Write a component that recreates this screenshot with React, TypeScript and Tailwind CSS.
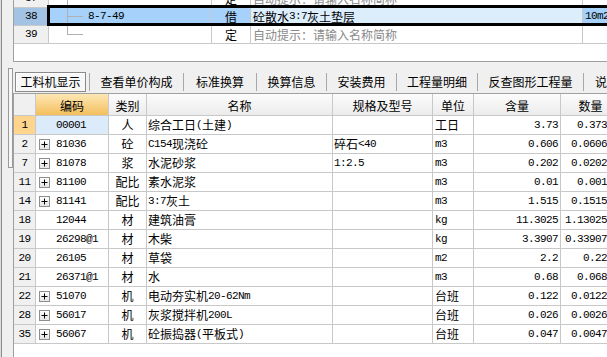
import React from "react";

const MONO = "font-['Liberation_Mono',monospace] text-[11px] tracking-[-0.6px]";

function T({ s }: { s: string }) {
  const parts = s.match(/[\x20-\x7e]+|[^\x20-\x7e]+/g) || [];
  return (
    <>
      {parts.map((p, i) =>
        /^[\x20-\x7e]/.test(p) ? (
          <span key={i} className={MONO}>
            {p}
          </span>
        ) : (
          <span key={i}>{p}</span>
        )
      )}
    </>
  );
}

type Row = {
  n: string;
  plus?: boolean;
  code: string;
  cat: string;
  name: string;
  spec?: string;
  unit: string;
  q: string;
  a: string;
  sel?: boolean;
};

const rows: Row[] = [
  { n: "1", code: "00001", cat: "人", name: "综合工日(土建)", unit: "工日", q: "3.73", a: "0.373", sel: true },
  { n: "2", plus: true, code: "81036", cat: "砼", name: "C154现浇砼", spec: "碎石<40", unit: "m3", q: "0.606", a: "0.0606" },
  { n: "7", plus: true, code: "81078", cat: "浆", name: "水泥砂浆", spec: "1:2.5", unit: "m3", q: "0.202", a: "0.0202" },
  { n: "11", plus: true, code: "81100", cat: "配比", name: "素水泥浆", unit: "m3", q: "0.01", a: "0.001" },
  { n: "14", plus: true, code: "81141", cat: "配比", name: "3:7灰土", unit: "m3", q: "1.515", a: "0.1515" },
  { n: "18", code: "12044", cat: "材", name: "建筑油膏", unit: "kg", q: "11.3025", a: "1.13025" },
  { n: "19", code: "26298@1", cat: "材", name: "木柴", unit: "kg", q: "3.3907", a: "0.33907" },
  { n: "20", code: "26105", cat: "材", name: "草袋", unit: "m2", q: "2.2", a: "0.22" },
  { n: "21", code: "26371@1", cat: "材", name: "水", unit: "m3", q: "0.68", a: "0.068" },
  { n: "22", plus: true, code: "51070", cat: "机", name: "电动夯实机20-62Nm", unit: "台班", q: "0.122", a: "0.0122" },
  { n: "28", plus: true, code: "56017", cat: "机", name: "灰浆搅拌机200L", unit: "台班", q: "0.026", a: "0.0026" },
  { n: "35", plus: true, code: "56067", cat: "机", name: "砼振捣器(平板式)", unit: "台班", q: "0.047", a: "0.0047" },
];

function PlusBox() {
  return (
    <svg width="11" height="11" viewBox="0 0 11 11" className="shrink-0">
      <defs>
        <linearGradient id="pb" x1="0" y1="0" x2="0" y2="1">
          <stop offset="0" stopColor="#ffffff" />
          <stop offset="1" stopColor="#e4e4e4" />
        </linearGradient>
      </defs>
      <rect x="0.5" y="0.5" width="10" height="10" fill="url(#pb)" stroke="#8e8e8e" />
      <line x1="2.5" y1="5.5" x2="8.5" y2="5.5" stroke="#000" />
      <line x1="5.5" y1="2.5" x2="5.5" y2="8.5" stroke="#000" />
    </svg>
  );
}

type TopRowProps = {
  num: string;
  tree: "full" | "mid" | "end";
  code?: string;
  kind: string;
  name: string;
  gray?: boolean;
  unit?: string;
  active?: boolean;
};

function TopRow({ num, tree, code, kind, name, gray, unit, active }: TopRowProps) {
  return (
    <div className="relative flex h-[18px] border-b border-[#c8c8c8]">
      <div
        className={`w-[35px] shrink-0 border-r border-[#c8c8c8] flex items-center justify-center ${MONO} ${
          active ? "bg-[#a3c3e5]" : "bg-[#f0f0f0]"
        }`}
      >
        {num}
      </div>
      <div className={`relative w-[163px] shrink-0 border-r border-[#c8c8c8] flex items-center pl-[39px] ${active ? "bg-[#a5d1fb]" : ""}`}>
        <span className={`absolute left-[18px] top-0 w-px bg-[#b0b0b0] ${tree === "end" ? "h-[9px]" : "h-full"}`} />
        {tree !== "full" && <span className="absolute left-[18px] top-[8px] w-[16px] h-px bg-[#b0b0b0]" />}
        {code && <span className={MONO}>{code}</span>}
      </div>
      <div className={`w-[39px] shrink-0 border-r border-[#c8c8c8] flex items-center justify-center ${active ? "bg-[#a5d1fb]" : ""}`}>
        {kind}
      </div>
      <div
        className={`w-[332px] shrink-0 border-r border-[#c8c8c8] flex items-center pl-[2px] whitespace-nowrap ${
          gray ? "text-[#8a8a8a]" : ""
        } ${active ? "bg-[#dcedfc]" : ""}`}
      >
        <T s={name} />
      </div>
      <div className={`w-[60px] shrink-0 flex items-center pl-[2px] ${active ? "bg-[#a5d1fb]" : ""}`}>
        {unit && <T s={unit} />}
      </div>
      {active && (
        <div className="absolute left-[33px] -top-[3px] -bottom-[1px] -right-[20px] border-[3px] border-black pointer-events-none" />
      )}
    </div>
  );
}

const tabs = [
  { label: "查看单价构成", w: "w-[93px]" },
  { label: "标准换算", w: "w-[72px]" },
  { label: "换算信息", w: "w-[69px]" },
  { label: "安装费用", w: "w-[69px]" },
  { label: "工程量明细", w: "w-[80px]" },
  { label: "反查图形工程量", w: "w-[105px]" },
];

function Sep() {
  return <div className="w-px h-[18px] bg-[#a8a8a8] shrink-0" />;
}

export default function App() {
  return (
    <div className="w-[607px] h-[357px] flex bg-[#f0f0f0] overflow-hidden font-['Noto_Sans_CJK_SC',sans-serif] text-[12px] text-black leading-none">
      {/* left strip */}
      <div className="w-[13px] shrink-0 flex">
        <div className="w-px bg-[#dcdcdc]" />
        <div className="w-px bg-[#8c8c8c]" />
        <div className="flex-1 pt-[68px] pl-[6px]">
          <div className="w-[5px] h-[100px] border border-[#9a9a9a] bg-[#f6f6f6]" />
        </div>
      </div>

      {/* right column */}
      <div className="flex-1 min-w-0 flex flex-col">
        {/* top panel */}
        <div className="h-[62px] shrink-0 bg-white border-l border-b border-[#a0a0a0] overflow-hidden">
          <div className="-mt-[10px] w-[700px]">
            <TopRow num="37" tree="mid" kind="定" name="自动提示：请输入名称简称" gray />
            <TopRow num="38" tree="mid" code="8-7-49" kind="借" name="砼散水3:7灰土垫层" unit="10m2" active />
            <TopRow num="39" tree="end" kind="定" name="自动提示：请输入名称简称" gray />
          </div>
        </div>

        {/* tab bar */}
        <div className="h-[31px] shrink-0 flex items-center pt-[8px] whitespace-nowrap overflow-hidden">
          <div className="ml-[2px] w-[71px] h-[20px] shrink-0 flex items-center justify-center border border-[#8a8a8a] bg-[#f7f7f7] shadow-[inset_1px_1px_0_#ffffff]">
            工料机显示
          </div>
          <div className="w-[3px] shrink-0" />
          <Sep />
          {tabs.map((t) => (
            <React.Fragment key={t.label}>
              <div className={`${t.w} shrink-0 flex items-center justify-center`}>{t.label}</div>
              <Sep />
            </React.Fragment>
          ))}
          <div className="pl-[11px] shrink-0">说明信息</div>
        </div>

        {/* grid */}
        <div className="flex-1 bg-white border-t border-l border-[#a0a0a0] overflow-hidden">
          <div className="w-[620px]">
            {/* header */}
            <div className="flex h-[22px] border-b border-[#c8c8c8]">
              <div className="w-[22px] shrink-0 border-r border-[#c8c8c8] bg-[#f0f0f0]" />
              <div className="w-[73px] shrink-0 border-r border-[#c8c8c8] bg-gradient-to-b from-[#fde7b4] to-[#f3bf5a] flex items-center justify-center pt-[2px]">
                编码
              </div>
              {[
                ["类别", "w-[38px]"],
                ["名称", "w-[186px]"],
                ["规格及型号", "w-[100px]"],
                ["单位", "w-[41px]"],
                ["含量", "w-[87px]"],
                ["数量", "w-[60px]"],
              ].map(([l, w]) => (
                <div
                  key={l}
                  className={`${w} shrink-0 border-r border-[#c8c8c8] bg-gradient-to-b from-[#fcfcfc] to-[#ececec] flex items-center justify-center pt-[2px]`}
                >
                  {l}
                </div>
              ))}
            </div>
            {/* rows */}
            {rows.map((r) => (
              <div key={r.n} className="flex h-[19px] border-b border-[#c8c8c8]">
                <div
                  className={`w-[22px] shrink-0 border-r border-[#c8c8c8] flex items-center justify-center ${MONO} ${
                    r.sel ? "bg-[#ffd58e]" : "bg-[#f0f0f0]"
                  }`}
                >
                  {r.n}
                </div>
                <div
                  className={`w-[73px] shrink-0 border-r border-[#c8c8c8] flex items-center ${
                    r.sel ? "bg-[#dcebfa]" : ""
                  } ${r.plus ? "pl-[3px]" : "pl-[20px]"}`}
                >
                  {r.plus && <PlusBox />}
                  <span className={`${MONO} ${r.plus ? "ml-[6px]" : ""}`}>{r.code}</span>
                </div>
                <div className="w-[38px] shrink-0 border-r border-[#c8c8c8] flex items-center justify-center">{r.cat}</div>
                <div className="w-[186px] shrink-0 border-r border-[#c8c8c8] flex items-center pl-[1px] whitespace-nowrap">
                  <T s={r.name} />
                </div>
                <div className="w-[100px] shrink-0 border-r border-[#c8c8c8] flex items-center pl-[1px] whitespace-nowrap">
                  {r.spec && <T s={r.spec} />}
                </div>
                <div className="w-[41px] shrink-0 border-r border-[#c8c8c8] flex items-center pl-[2px]">
                  <T s={r.unit} />
                </div>
                <div className={`w-[87px] shrink-0 border-r border-[#c8c8c8] flex items-center justify-end pr-[2px] ${MONO}`}>
                  {r.q}
                </div>
                <div className={`w-[47px] shrink-0 flex items-center justify-end pr-[1px] ${MONO}`}>{r.a}</div>
                <div className="w-[13px] shrink-0 border-l border-[#c8c8c8]" />
              </div>
            ))}
          </div>
        </div>
      </div>
    </div>
  );
}
